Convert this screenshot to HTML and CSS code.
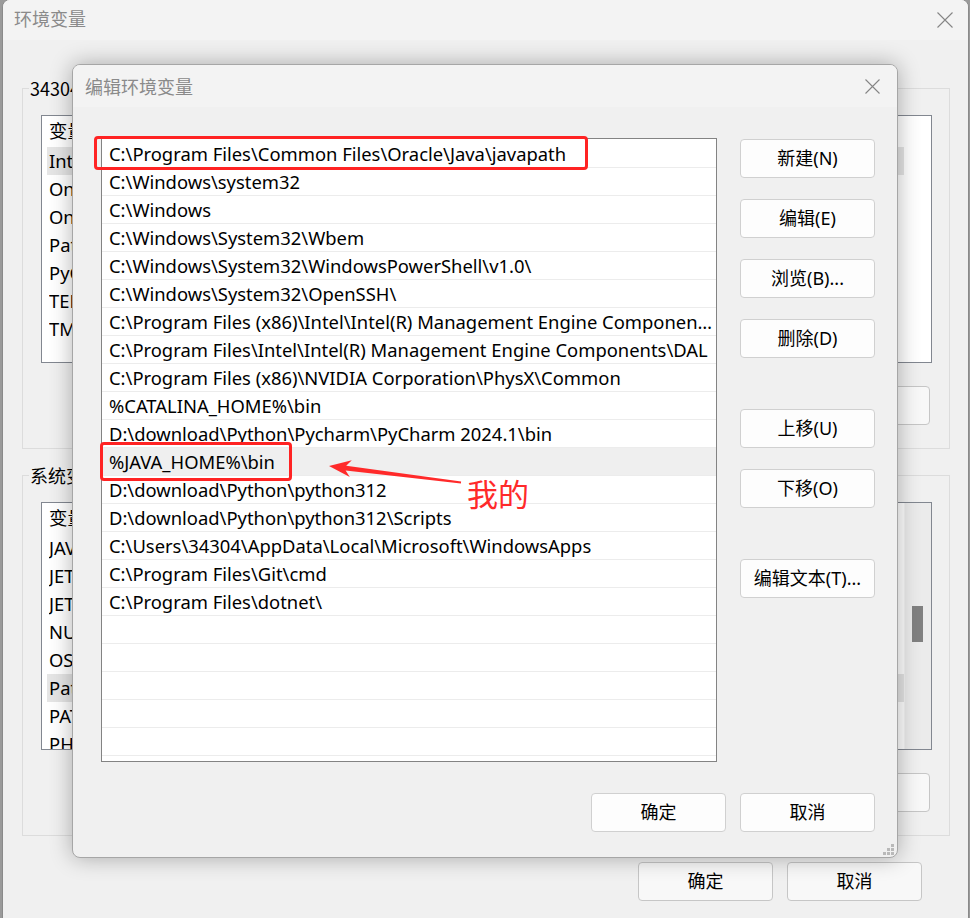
FILE: index.html
```html
<!DOCTYPE html>
<html lang="zh-CN">
<head>
<meta charset="utf-8">
<title>环境变量</title>
<link rel="stylesheet" href="styles.css">
</head>
<body>
<div class="win outer">
  <div class="titlebar">
    <span class="title">环境变量</span>
    <svg class="close" width="16" height="16" viewBox="0 0 16 16"><path d="M0.5 0.5L15.5 15.5M15.5 0.5L0.5 15.5" stroke="#858585" stroke-width="1.1" fill="none"/></svg>
  </div>
  <div class="outer-body">
    <fieldset class="group">
      <legend>34304 的用户变量(U)</legend>
      <div class="lv">
        <div class="lv-main">
          <div class="lv-head"><span class="c1">变量</span></div>
          <div class="lv-row sel"><span class="c1">IntelliJ IDEA</span></div>
          <div class="lv-row"><span class="c1">OneDrive</span></div>
          <div class="lv-row"><span class="c1">OneDriveConsumer</span></div>
          <div class="lv-row"><span class="c1">Path</span></div>
          <div class="lv-row"><span class="c1">PyCharm</span></div>
          <div class="lv-row"><span class="c1">TEMP</span></div>
          <div class="lv-row"><span class="c1">TMP</span></div>
        </div>
        <div class="lv-side"></div>
      </div>
      <div class="grp-btns">
        <button class="btn">新建(N)...</button>
        <button class="btn">编辑(E)...</button>
        <button class="btn">删除(D)</button>
      </div>
    </fieldset>
    <fieldset class="group">
      <legend>系统变量(S)</legend>
      <div class="lv">
        <div class="lv-main">
          <div class="lv-head"><span class="c1">变量</span></div>
          <div class="lv-row"><span class="c1">JAVA_HOME</span></div>
          <div class="lv-row"><span class="c1">JETBRAINS_CLIENT</span></div>
          <div class="lv-row"><span class="c1">JETBRAINSCLIENT</span></div>
          <div class="lv-row"><span class="c1">NUMBER_OF_PROCESSORS</span></div>
          <div class="lv-row"><span class="c1">OS</span></div>
          <div class="lv-row sel"><span class="c1">Path</span></div>
          <div class="lv-row"><span class="c1">PATHEXT</span></div>
          <div class="lv-row"><span class="c1">PHPSTORM</span></div>
        </div>
        <div class="lv-side track"><div class="thumb"></div></div>
      </div>
      <div class="grp-btns">
        <button class="btn">新建(W)...</button>
        <button class="btn">编辑(I)...</button>
        <button class="btn">删除(L)</button>
      </div>
    </fieldset>
    <div class="dlg-btns">
      <button class="btn">确定</button>
      <button class="btn">取消</button>
    </div>
  </div>
</div>

<div class="win inner">
  <div class="titlebar">
    <span class="title">编辑环境变量</span>
    <svg class="close" width="15" height="15" viewBox="0 0 15 15"><path d="M0.5 0.5L14.5 14.5M14.5 0.5L0.5 14.5" stroke="#858585" stroke-width="1.1" fill="none"/></svg>
  </div>
  <div class="inner-body">
    <div class="inner-top">
      <div class="pl">
        <div class="pl-row">C:\Program Files\Common Files\Oracle\Java\javapath</div>
        <div class="pl-row">C:\Windows\system32</div>
        <div class="pl-row">C:\Windows</div>
        <div class="pl-row">C:\Windows\System32\Wbem</div>
        <div class="pl-row">C:\Windows\System32\WindowsPowerShell\v1.0\</div>
        <div class="pl-row">C:\Windows\System32\OpenSSH\</div>
        <div class="pl-row">C:\Program Files (x86)\Intel\Intel(R) Management Engine Components\iCLS\</div>
        <div class="pl-row">C:\Program Files\Intel\Intel(R) Management Engine Components\DAL</div>
        <div class="pl-row">C:\Program Files (x86)\NVIDIA Corporation\PhysX\Common</div>
        <div class="pl-row">%CATALINA_HOME%\bin</div>
        <div class="pl-row">D:\download\Python\Pycharm\PyCharm 2024.1\bin</div>
        <div class="pl-row sel">%JAVA_HOME%\bin</div>
        <div class="pl-row">D:\download\Python\python312</div>
        <div class="pl-row">D:\download\Python\python312\Scripts</div>
        <div class="pl-row">C:\Users\34304\AppData\Local\Microsoft\WindowsApps</div>
        <div class="pl-row">C:\Program Files\Git\cmd</div>
        <div class="pl-row">C:\Program Files\dotnet\</div>
        <div class="pl-row"></div>
        <div class="pl-row"></div>
        <div class="pl-row"></div>
        <div class="pl-row"></div>
        <div class="pl-row"></div>
      </div>
      <div class="side-btns">
        <button class="btn">新建(N)</button>
        <button class="btn">编辑(E)</button>
        <button class="btn">浏览(B)...</button>
        <button class="btn">删除(D)</button>
        <button class="btn mt-lg">上移(U)</button>
        <button class="btn">下移(O)</button>
        <button class="btn mt-lg">编辑文本(T)...</button>
      </div>
    </div>
    <div class="inner-foot">
      <button class="btn">确定</button>
      <button class="btn">取消</button>
    </div>
  </div>
  <svg class="grip" width="11" height="11" viewBox="0 0 11 11" fill="#b9b9b9">
    <rect x="8" y="0" width="3" height="3"/>
    <rect x="4" y="4" width="3" height="3"/><rect x="8" y="4" width="3" height="3"/>
    <rect x="0" y="8" width="3" height="3"/><rect x="4" y="8" width="3" height="3"/><rect x="8" y="8" width="3" height="3"/>
  </svg>
</div>

<div class="mark mark1"></div>
<div class="mark mark2"></div>
<svg class="arrow" width="150" height="40" viewBox="0 0 150 40">
  <polygon points="9,16 31.8,10.3 26.2,15.7 141.1,31.4 140.9,33.4 25.6,20.5 29.8,27.1" fill="#ff2a2a"/>
</svg>
<div class="note">我的</div>
</body>
</html>
```
FILE: styles.css
```css
* { box-sizing: border-box; margin: 0; padding: 0; }
html, body { width: 970px; height: 918px; overflow: hidden; }
body {
  position: relative;
  background: #9a9a9a;
  font-family: "Noto Sans", "Noto Sans CJK SC", sans-serif;
  font-size: 18px;
  color: #000;
}

.win { position: absolute; background: #f0f0f0; }

.titlebar {
  display: flex;
  align-items: center;
  justify-content: space-between;
  background: #f3f3f3;
}
.title { color: #8a8a8a; font-family: "Noto Sans CJK SC", sans-serif; font-size: 18px; line-height: 24px; }
.close { display: block; }

/* ---------- outer window ---------- */
.outer {
  left: 2px; top: -1px;
  width: 967px; height: 930px;
  border: 1px solid #8a8a8a;
  border-radius: 8px 8px 0 0;
  overflow: hidden;
}
.outer .titlebar { height: 40px; padding: 0 15px 4px 11px; }
.outer .close { margin-top: 4px; }
.outer-body { padding-top: 36px; }

.group {
  margin: 0 18px 14px 19px;
  border: 1px solid #dcdcdc;
  padding: 15px 19px 23px 18px;
  min-width: 0;
}
.group legend {
  font-size: 18px;
  line-height: 24px;
  padding: 0 1px;
  margin-left: -12px;
  font-family: "Noto Sans CJK SC", sans-serif;
}
.lv {
  height: 248px;
  margin-right: -2px;
  border: 1px solid #828790;
  background: #fff;
  display: flex;
  overflow: hidden;
}
.lv-main { flex: 1; padding-left: 5px; overflow: hidden; font-size: 18.4px; }
.lv-head, .lv-row { display: flex; white-space: nowrap; padding-left: 2px; }
.lv-head { height: 31px; line-height: 30px; }
.lv-row { height: 28px; line-height: 28px; }
.lv-row.sel { background: #e5e5e5; }
.c1 { width: 250px; flex: none; overflow: hidden; }
.lv-side { width: 27px; flex: none; }
.lv-side.track { background: #ebebeb; border-left: 1px solid #f4f4f4; padding: 103px 0 0 7px; }
.thumb { width: 11px; height: 36px; background: #808080; }

.grp-btns, .dlg-btns { display: flex; justify-content: flex-end; }
.grp-btns { margin-top: 23px; gap: 13px; }
.dlg-btns { margin-top: 26px; gap: 14px; padding-right: 46px; }

.btn {
  width: 135px; height: 39px;
  background: #fdfdfd;
  border: 1px solid #d0d0d0;
  border-radius: 4px;
  font-family: "Noto Sans", "Noto Sans CJK SC", sans-serif;
  font-size: 18px;
  color: #000;
  line-height: 37px;
}
.outer .btn { background: #f8f8f8; border-color: #c6c6c6; }

/* ---------- inner dialog ---------- */
.inner {
  left: 72px; top: 64px;
  width: 826px; height: 794px;
  border: 1px solid #a6a6a6;
  border-radius: 8px;
  box-shadow: 0 0 22px rgba(0, 0, 0, 0.3);
  overflow: hidden;
}
.inner .titlebar { height: 42px; padding: 0 17px 0 12px; }
.inner-body { padding: 31px 22px 0 28px; }
.inner-top { display: flex; gap: 23px; }
.pl {
  width: 616px; height: 624px;
  border: 1px solid #838383;
  background: #fff;
  padding-top: 1px;
  overflow: hidden;
}
.pl-row {
  height: 28px;
  line-height: 27px;
  font-size: 18.4px;
  border-bottom: 1px solid #ececec;
  padding: 0 2px 0 7px;
  white-space: nowrap;
  overflow: hidden;
  text-overflow: ellipsis;
}
.pl-row.sel { background: #efefef; }
.side-btns { display: flex; flex-direction: column; gap: 21px; padding-top: 1px; }
.side-btns .mt-lg { margin-top: 30px; }
.inner-foot { display: flex; justify-content: flex-end; gap: 14px; margin-top: 31px; }
.grip { position: absolute; right: 3px; bottom: 2px; }

/* ---------- annotations ---------- */
.mark { position: absolute; border: 3.5px solid #ff2323; border-radius: 4px; }
.mark1 { left: 94px; top: 136px; width: 494px; height: 34px; }
.mark2 { left: 100px; top: 442px; width: 192px; height: 39px; }
.arrow { position: absolute; left: 320px; top: 450px; }
.note {
  position: absolute; left: 467px; top: 474px;
  font-family: "Noto Sans CJK SC", sans-serif;
  font-size: 31px; line-height: 38px;
  color: #ff2a2a;
}
```
